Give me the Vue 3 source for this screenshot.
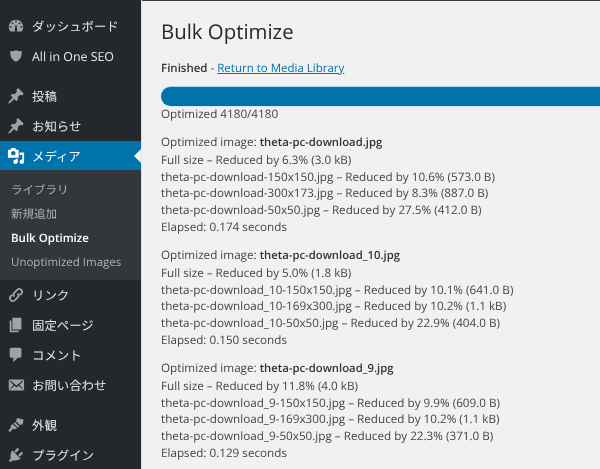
<script setup>
const groupA = [
  { label: 'ダッシュボード', icon: 'gauge' },
  { label: 'All in One SEO', icon: 'shield' },
]
const groupB = [
  { label: '投稿', icon: 'pin' },
  { label: 'お知らせ', icon: 'pin' },
]
const submenu = [
  { label: 'ライブラリ' },
  { label: '新規追加' },
  { label: 'Bulk Optimize', current: true },
  { label: 'Unoptimized Images' },
]
const groupC = [
  { label: 'リンク', icon: 'link' },
  { label: '固定ページ', icon: 'pages' },
  { label: 'コメント', icon: 'comment' },
  { label: 'お問い合わせ', icon: 'mail' },
]
const groupD = [
  { label: '外観', icon: 'brush' },
  { label: 'プラグイン', icon: 'plug' },
]
const results = [
  {
    name: 'theta-pc-download.jpg',
    lines: [
      'Full size – Reduced by 6.3% (3.0 kB)',
      'theta-pc-download-150x150.jpg – Reduced by 10.6% (573.0 B)',
      'theta-pc-download-300x173.jpg – Reduced by 8.3% (887.0 B)',
      'theta-pc-download-50x50.jpg – Reduced by 27.5% (412.0 B)',
      'Elapsed: 0.174 seconds',
    ],
  },
  {
    name: 'theta-pc-download_10.jpg',
    lines: [
      'Full size – Reduced by 5.0% (1.8 kB)',
      'theta-pc-download_10-150x150.jpg – Reduced by 10.1% (641.0 B)',
      'theta-pc-download_10-169x300.jpg – Reduced by 10.2% (1.1 kB)',
      'theta-pc-download_10-50x50.jpg – Reduced by 22.9% (404.0 B)',
      'Elapsed: 0.150 seconds',
    ],
  },
  {
    name: 'theta-pc-download_9.jpg',
    lines: [
      'Full size – Reduced by 11.8% (4.0 kB)',
      'theta-pc-download_9-150x150.jpg – Reduced by 9.9% (609.0 B)',
      'theta-pc-download_9-169x300.jpg – Reduced by 10.2% (1.1 kB)',
      'theta-pc-download_9-50x50.jpg – Reduced by 22.3% (371.0 B)',
      'Elapsed: 0.129 seconds',
    ],
  },
]
const icons = {
  gauge: 'M3.760 16h12.480C17.340 14.630 18 12.890 18 11c0-4.420-3.580-8-8-8s-8 3.580-8 8c0 1.890.66 3.630 1.760 5zM10 4c.55 0 1 .45 1 1s-.45 1-1 1-1-.45-1-1 .45-1 1-1zM6 6c.55 0 1 .45 1 1s-.45 1-1 1-1-.45-1-1 .45-1 1-1zm8 0c.55 0 1 .45 1 1s-.45 1-1 1-1-.45-1-1 .45-1 1-1zM4 10c.55 0 1 .45 1 1s-.45 1-1 1-1-.45-1-1 .45-1 1-1zm12 0c.55 0 1 .45 1 1s-.45 1-1 1-1-.45-1-1 .45-1 1-1zM8.700 14.700l.8-6.200h1l.8 6.200a1.300 1.300 0 1 1-2.600 0z',
  shield: 'M10 3.500c2.200 1 4.300 1.300 6.500 1.300 0 5.700-1.600 9.500-6.500 11.700C5.100 14.300 3.500 10.500 3.500 4.800c2.200 0 4.300-.3 6.500-1.300z',
  pin: 'M10.440 3.020l1.820-1.820 6.360 6.350-1.830 1.820c-1.050-.68-2.480-.57-3.410.36l-.75.75c-.92.93-1.040 2.350-.35 3.410l-1.830 1.820-2.410-2.410-2.800 2.790c-.42.42-3.380 2.710-3.800 2.290s1.860-3.390 2.280-3.810l2.790-2.790L4.100 9.360l1.830-1.820c1.050.69 2.480.57 3.400-.36l.75-.75c.93-.92 1.050-2.350.36-3.410z',
  link: 'M8.200 11.800a3.200 3.200 0 0 1 0-4.500l3.300-3.300a3.200 3.200 0 0 1 4.500 4.500l-1.600 1.600M11.800 8.200a3.200 3.200 0 0 1 0 4.500L8.500 16A3.200 3.200 0 0 1 4 11.500l1.600-1.600',
  pages: 'M6 15V2h10v13H6zm-1 1h8v2H3V5h2v11z',
  comment: 'M5 2h9c1.100 0 2 .9 2 2v7c0 1.100-.9 2-2 2h-2l-5 5v-5H5c-1.100 0-2-.9-2-2V4c0-1.100.9-2 2-2z',
  mail: 'M19 14.500v-9c0-.83-.67-1.500-1.500-1.500H3.490c-.83 0-1.500.67-1.500 1.500v9c0 .83.67 1.500 1.500 1.500H17.500c.83 0 1.500-.67 1.500-1.500zm-1.310-9.110c.33.33.15.67-.03.84L13.600 9.950l3.900 4.060c.12.14.2.36.06.51-.13.16-.43.15-.56.05l-4.370-3.730-2.140 1.950-2.130-1.950-4.370 3.730c-.13.1-.43.11-.56-.05-.14-.15-.06-.37.06-.51l3.900-4.060-4.060-3.720c-.18-.17-.36-.51-.03-.84s.67-.17.95.07l6.240 5.040 6.250-5.040c.28-.24.62-.4.95-.07z',
  brush: 'M13 2.500l5.500 1.700-1.200 5.500-2-.6-1 1.200-4.600-4.700 1.200-1-.6-1.700zM8.700 6.600l5 5-1.500 1.500-5-5zM6.400 9l4.700 4.700-2.500 1.200-1.500-1-3.700 4-2-1.400 3.100-4.100-.5-1.600z',
  plug: 'M13.110 4.360L9.870 7.600 8 5.730l3.240-3.240c.35-.34 1.050-.2 1.560.32.52.51.66 1.210.31 1.550zm-8 1.770l.91-1.120 9.010 9.010-1.190.84c-.71.71-2.630 1.160-3.820 1.160H6.140L4.900 17.260c-.59.59-1.540.59-2.120 0-.59-.58-.59-1.530 0-2.120l1.240-1.240v-3.880c0-1.130.4-3.050 1.090-3.890zm7.260 3.970l3.240-3.240c.34-.35 1.040-.21 1.550.31.52.51.66 1.210.31 1.550l-3.240 3.250z',
}
</script>

<template>
  <div class="screen">
    <aside class="sidebar">
      <ul class="menu group-a">
        <li v-for="item in groupA" :key="item.label" class="item">
          <svg class="icon" viewBox="0 0 20 20"><path :d="icons[item.icon]" /></svg>
          <span>{{ item.label }}</span>
        </li>
      </ul>
      <ul class="menu group-b">
        <li v-for="item in groupB" :key="item.label" class="item">
          <svg class="icon" viewBox="0 0 20 20"><path :d="icons[item.icon]" /></svg>
          <span>{{ item.label }}</span>
        </li>
        <li class="item active">
          <svg class="icon" viewBox="0 0 20 20">
            <path d="M13 11V4c0-.55-.45-1-1-1h-1.670L9 1H5L3.670 3H2c-.55 0-1 .45-1 1v7c0 .55.45 1 1 1h10c.55 0 1-.45 1-1zM7 4.500c1.380 0 2.500 1.120 2.500 2.500S8.380 9.500 7 9.500 4.500 8.380 4.500 7 5.620 4.500 7 4.500zM14 6h5v10.500c0 1.380-1.120 2.500-2.500 2.500S14 17.880 14 16.500s1.120-2.500 2.500-2.500c.17 0 .34.020.5.050V9h-3V6zm-4 8.050V13h2v3.500c0 1.380-1.120 2.500-2.500 2.500S7 17.880 7 16.500 8.120 14 9.500 14c.17 0 .34.020.5.050z" />
          </svg>
          <span>メディア</span>
          <i class="notch"></i>
        </li>
      </ul>
      <ul class="submenu">
        <li v-for="s in submenu" :key="s.label" :class="{ current: s.current }">{{ s.label }}</li>
      </ul>
      <ul class="menu group-c">
        <li v-for="item in groupC" :key="item.label" class="item">
          <svg v-if="item.icon === 'link'" class="icon stroke" viewBox="0 0 20 20"><path :d="icons[item.icon]" /></svg>
          <svg v-else class="icon" viewBox="0 0 20 20"><path :d="icons[item.icon]" /></svg>
          <span>{{ item.label }}</span>
        </li>
      </ul>
      <ul class="menu group-d">
        <li v-for="item in groupD" :key="item.label" class="item">
          <svg class="icon" viewBox="0 0 20 20"><path :d="icons[item.icon]" /></svg>
          <span>{{ item.label }}</span>
        </li>
      </ul>
    </aside>
    <main class="content">
      <h1>Bulk Optimize</h1>
      <p class="status"><b>Finished</b> - <a href="#">Return to Media Library</a></p>
      <div class="bar"></div>
      <p class="count">Optimized 4180/4180</p>
      <section v-for="r in results" :key="r.name" class="result">
        <div>Optimized image: <b>{{ r.name }}</b></div>
        <div v-for="line in r.lines" :key="line">{{ line }}</div>
      </section>
    </main>
  </div>
</template>

<style scoped>
.screen {
  display: flex;
  width: 600px;
  height: 469px;
  overflow: hidden;
  background: #f1f1f2;
  font-family: "Open Sans", "Noto Sans CJK JP", sans-serif;
  color: #444;
  filter: blur(0.35px);
  text-rendering: geometricPrecision;
}
.sidebar {
  flex: 0 0 141px;
  background: #23282d;
  border-right: 1px solid #dfe0e2;
  padding-top: 11px;
  box-sizing: content-box;
}
ul {
  list-style: none;
  margin: 0;
  padding: 0;
}
.item {
  position: relative;
  display: flex;
  align-items: center;
  gap: 7px;
  height: 30px;
  padding-left: 7px;
  font-size: 12.400px;
  color: #e6e7e8;
}
.icon {
  flex: 0 0 18px;
  width: 18px;
  height: 18px;
  fill: #9ea3a8;
}
.icon.stroke {
  fill: none;
  stroke: #9ea3a8;
  stroke-width: 2;
}
.group-b {
  margin-top: 10px;
}
.active {
  height: 29px;
  background: #0073aa;
  color: #fff;
}
.active .icon {
  fill: #fff;
}
.notch {
  position: absolute;
  right: 0;
  top: 8px;
  border: 7px solid transparent;
  border-right-color: #f1f1f2;
  border-left-width: 0;
}
.submenu {
  height: 110px;
  padding-top: 8.500px;
  box-sizing: border-box;
  background: #32373c;
  color: #aeb1b4;
  font-size: 11.500px;
}
.submenu li {
  height: 24.100px;
  line-height: 24px;
  padding-left: 11px;
}
.submenu .current {
  color: #fff;
  font-weight: 600;
}
.group-d {
  margin-top: 10px;
}
.content {
  flex: 1;
  min-width: 0;
  padding: 0 0 0 19px;
  border-top: 1px solid #3a3d40;
  font-size: 11.700px;
  line-height: 16.800px;
}
h1 {
  margin: 17px 0 0;
  font-size: 20.400px;
  font-weight: 400;
  line-height: 26px;
  color: #23282d;
}
.status {
  margin: 15.500px 0 0;
  line-height: 18px;
  font-size: 11.500px;
}
.status b {
  font-weight: 600;
  color: #333;
}
.status a {
  color: #0073aa;
  text-decoration: underline;
}
.bar {
  height: 19px;
  margin-top: 9.500px;
  margin-right: -10px;
  background: #0073aa;
  border-radius: 10px 0 0 10px;
  box-shadow: 0 -1px 0 #a5d4ec, 0 1px 0 #cfe9f7;
}
.count {
  margin: 0 0 0.700px;
}
.result {
  margin-top: 11.200px;
}
.result b {
  font-weight: 600;
  font-size: 11.300px;
  color: #333;
}
</style>

<style>
html, body {
  margin: 0;
  background: #f1f1f2;
}
</style>
